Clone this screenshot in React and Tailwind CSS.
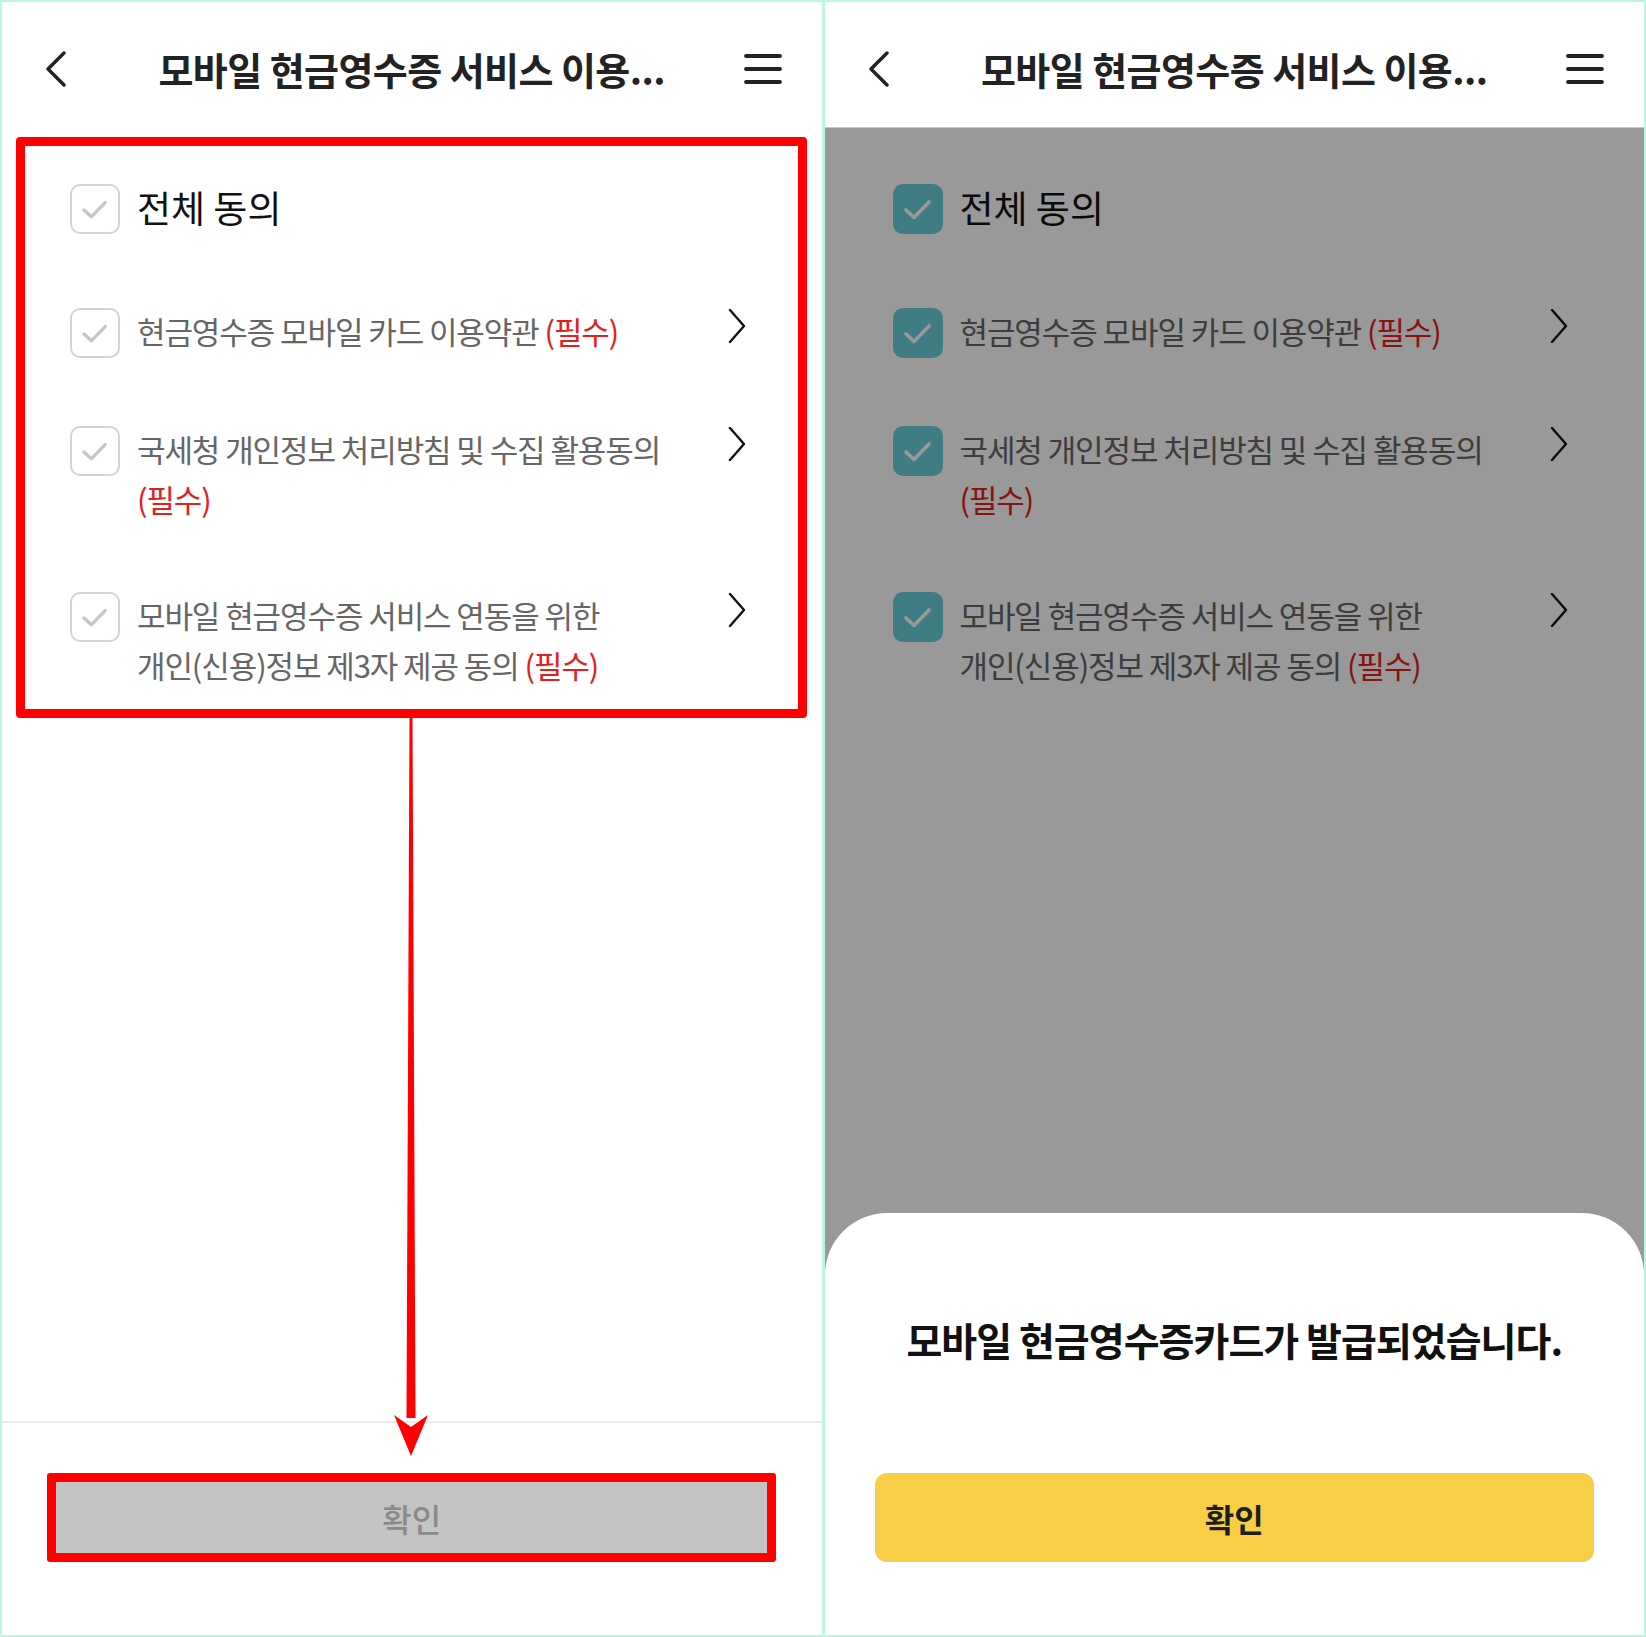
import React from 'react';

const FONT = "font-['Noto_Sans_CJK_KR','Noto_Sans',sans-serif]";

const BackIcon = () => (
    <svg width="24" height="36" viewBox="0 0 24 36" fill="none">
        <polyline points="20,2 4,18 20,34" stroke="#222" strokeWidth="3.4" strokeLinecap="round" strokeLinejoin="round" />
    </svg>
);

const MenuIcon = () => (
    <svg width="40" height="32" viewBox="0 0 40 32" fill="none">
        <line x1="3" y1="3" x2="37" y2="3" stroke="#222" strokeWidth="3.8" strokeLinecap="round" />
        <line x1="3" y1="16" x2="37" y2="16" stroke="#222" strokeWidth="3.8" strokeLinecap="round" />
        <line x1="3" y1="29" x2="37" y2="29" stroke="#222" strokeWidth="3.8" strokeLinecap="round" />
    </svg>
);

const ChevronRight = () => (
    <svg width="18" height="34" viewBox="0 0 18 34" fill="none">
        <polyline points="2,1 16,17 2,33" stroke="#111" strokeWidth="2.4" strokeLinecap="round" strokeLinejoin="round" />
    </svg>
);

// checkbox: grey outline when off, teal fill when on
const Check = ({ checked }) => (
    <div
        className={
            checked
                ? 'w-[50px] h-[50px] shrink-0 rounded-[10px] bg-[#6acfdc] flex items-center justify-center'
                : 'w-[50px] h-[50px] shrink-0 rounded-[10px] border-2 border-[#d4d4d4] bg-white flex items-center justify-center'
        }
    >
        <svg width="50" height="50" viewBox="0 0 50 50" fill="none">
            <polyline
                points="13,26 21,33.5 36,18"
                stroke={checked ? '#ffffff' : '#c6c6c6'}
                strokeWidth="3.6"
                strokeLinecap="round"
                strokeLinejoin="round"
            />
        </svg>
    </div>
);

const Req = () => <span className="text-[#e3201c]">(필수)</span>;

const TermRow = ({ checked, children }) => (
    <div className="flex items-start">
        <Check checked={checked} />
        <div className="flex-1 ml-[17px] -mt-[2px] text-[31px] leading-[50px] tracking-[-0.035em] text-[#666] whitespace-nowrap">
            {children}
        </div>
        <div className="mt-[1px]">
            <ChevronRight />
        </div>
    </div>
);

const Header = () => (
    <div className="h-[125px] pt-[7px] grid grid-cols-[120px_1fr_120px] items-center bg-white">
        <div className="pl-[42px] pt-[2px]">
            <BackIcon />
        </div>
        <h1 className="text-center text-[38px] font-bold tracking-[-0.015em] text-[#222] whitespace-nowrap">
            모바일 현금영수증 서비스 이용...
        </h1>
        <div className="flex justify-end pr-[39px] pt-[2px]">
            <MenuIcon />
        </div>
    </div>
);

const TermsList = ({ checked }) => (
    <div className="flex-1 pt-[57px] pl-[68px] pr-[76px] flex flex-col gap-[68px]">
        <div className="flex items-start mb-[6px]">
            <Check checked={checked} />
            <span className="ml-[17px] -mt-[2px] text-[37px] leading-[50px] tracking-[0em] text-[#111]">전체 동의</span>
        </div>
        <TermRow checked={checked}>
            현금영수증 모바일 카드 이용약관 <Req />
        </TermRow>
        <TermRow checked={checked}>
            국세청 개인정보 처리방침 및 수집 활용동의
            <br />
            <Req />
        </TermRow>
        <TermRow checked={checked}>
            모바일 현금영수증 서비스 연동을 위한
            <br />
            개인(신용)정보 제3자 제공 동의 <Req />
        </TermRow>
    </div>
);

const LeftPanel = () => (
    <div className="relative flex-1 h-full bg-white flex flex-col overflow-hidden">
        <Header />
        <TermsList checked={false} />
        <div className="h-[2px] bg-[#ececec]" />
        <div className="pt-[50px] pb-[73px] px-[51px]">
            <button className="w-full h-[89px] bg-[#c4c4c4] text-[32px] font-medium text-[#8a8a8a]">확인</button>
        </div>

        {/* annotation: red frames + arrow */}
        <div className="absolute left-[14px] top-[135px] w-[791px] h-[581px] border-[9px] border-[#ff0000] rounded-[4px]" />
        <svg className="absolute left-[389px] top-[716px]" width="40" height="740" viewBox="0 0 40 740">
            <polygon points="18.5,0 21.5,0 24.5,700 15.5,700" fill="#ff0000" />
            <polygon points="3,697 20,709 37,697 20,738" fill="#ff0000" />
        </svg>
        <div className="absolute left-[45px] top-[1471px] w-[729px] h-[89px] border-[9px] border-[#ff0000] rounded-[3px]" />
    </div>
);

const RightPanel = () => (
    <div className="relative flex-1 h-full bg-white flex flex-col overflow-hidden">
        <Header />
        <TermsList checked={true} />
        <div className="h-[2px] bg-[#ececec]" />
        <div className="pt-[50px] pb-[73px] px-[51px]">
            <button className="w-full h-[89px] bg-[#c4c4c4] text-[32px] font-medium text-[#8a8a8a]">확인</button>
        </div>

        {/* dimmed backdrop + bottom sheet */}
        <div className="absolute inset-x-0 top-[125px] bottom-0 bg-black/40 border-t border-[#c8c8c8]" />
        <div className="absolute inset-x-0 bottom-0 h-[422px] bg-white rounded-t-[62px] flex flex-col items-center pt-[102px]">
            <p className="text-[39px] leading-[48px] font-bold tracking-[-0.025em] text-[#111] whitespace-nowrap">
                모바일 현금영수증카드가 발급되었습니다.
            </p>
            <button className="mt-[110px] w-[719px] h-[89px] rounded-[12px] bg-[#f8ce46] text-[32px] font-bold text-[#1e1e1e]">
                확인
            </button>
        </div>
    </div>
);

export default function App() {
    return (
        <div className={`w-[1646px] h-[1637px] bg-[#bcf6e2] p-[2px] flex gap-[3px] ${FONT}`}>
            <LeftPanel />
            <RightPanel />
        </div>
    );
}
